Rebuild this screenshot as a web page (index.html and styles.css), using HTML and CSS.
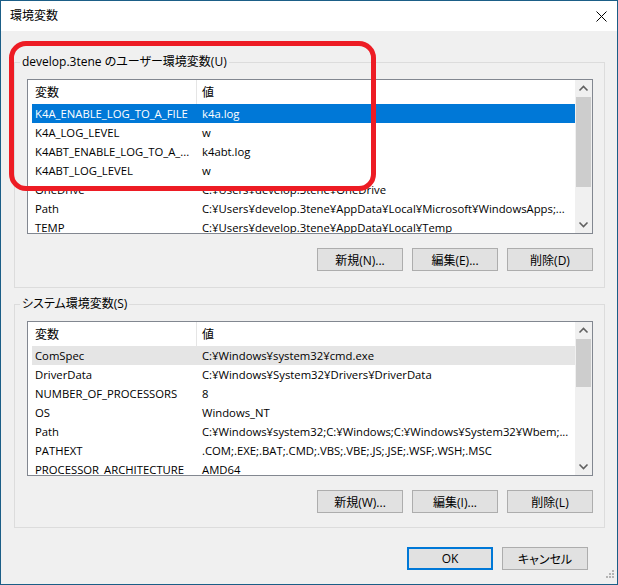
FILE: index.html
```html
<!DOCTYPE html>
<html lang="ja">
<head>
  <meta charset="UTF-8" />
  <title>環境変数</title>
  <link rel="stylesheet" href="styles.css">
</head>
<body>
  <div class="window">
    <div class="titlebar">
      <span class="title">環境変数</span>
      <svg class="close" width="11" height="11" viewBox="0 0 11 11"><path d="M0.5 0.5 L10.5 10.5 M10.5 0.5 L0.5 10.5" stroke="#000" stroke-width="1" fill="none"/></svg>
    </div>

    <div class="content">
      <fieldset class="group">
        <legend>develop.3tene のユーザー環境変数(U)</legend>
        <div class="list">
          <div class="list-main">
            <div class="list-head"><div class="cell name">変数</div><div class="cell value">値</div></div>
            <div class="row selected"><div class="cell name">K4A_ENABLE_LOG_TO_A_FILE</div><div class="cell value">k4a.log</div></div>
            <div class="row"><div class="cell name">K4A_LOG_LEVEL</div><div class="cell value">w</div></div>
            <div class="row"><div class="cell name">K4ABT_ENABLE_LOG_TO_A_...</div><div class="cell value">k4abt.log</div></div>
            <div class="row"><div class="cell name">K4ABT_LOG_LEVEL</div><div class="cell value">w</div></div>
            <div class="row"><div class="cell name">OneDrive</div><div class="cell value">C:¥Users¥develop.3tene¥OneDrive</div></div>
            <div class="row"><div class="cell name">Path</div><div class="cell value">C:¥Users¥develop.3tene¥AppData¥Local¥Microsoft¥WindowsApps;...</div></div>
            <div class="row"><div class="cell name">TEMP</div><div class="cell value">C:¥Users¥develop.3tene¥AppData¥Local¥Temp</div></div>
          </div>
          <div class="scrollbar">
            <svg class="arrow" width="17" height="17" viewBox="0 0 17 17"><path d="M4.5 10.5 L8.5 6.5 L12.5 10.5" stroke="#606060" stroke-width="1.6" fill="none"/></svg>
            <div class="track"><div class="thumb" style="height: 90px"></div></div>
            <svg class="arrow" width="17" height="17" viewBox="0 0 17 17"><path d="M4.5 6.5 L8.5 10.5 L12.5 6.5" stroke="#606060" stroke-width="1.6" fill="none"/></svg>
          </div>
        </div>
        <div class="buttons">
          <button class="btn">新規(N)...</button>
          <button class="btn">編集(E)...</button>
          <button class="btn">削除(D)</button>
        </div>
      </fieldset>

      <fieldset class="group system">
        <legend>システム環境変数(S)</legend>
        <div class="list">
          <div class="list-main">
            <div class="list-head"><div class="cell name">変数</div><div class="cell value">値</div></div>
            <div class="row hover"><div class="cell name">ComSpec</div><div class="cell value">C:¥Windows¥system32¥cmd.exe</div></div>
            <div class="row"><div class="cell name">DriverData</div><div class="cell value">C:¥Windows¥System32¥Drivers¥DriverData</div></div>
            <div class="row"><div class="cell name">NUMBER_OF_PROCESSORS</div><div class="cell value">8</div></div>
            <div class="row"><div class="cell name">OS</div><div class="cell value">Windows_NT</div></div>
            <div class="row"><div class="cell name">Path</div><div class="cell value">C:¥Windows¥system32;C:¥Windows;C:¥Windows¥System32¥Wbem;...</div></div>
            <div class="row"><div class="cell name">PATHEXT</div><div class="cell value">.COM;.EXE;.BAT;.CMD;.VBS;.VBE;.JS;.JSE;.WSF;.WSH;.MSC</div></div>
            <div class="row"><div class="cell name">PROCESSOR_ARCHITECTURE</div><div class="cell value">AMD64</div></div>
          </div>
          <div class="scrollbar">
            <svg class="arrow" width="17" height="17" viewBox="0 0 17 17"><path d="M4.5 10.5 L8.5 6.5 L12.5 10.5" stroke="#606060" stroke-width="1.6" fill="none"/></svg>
            <div class="track"><div class="thumb" style="height: 48px"></div></div>
            <svg class="arrow" width="17" height="17" viewBox="0 0 17 17"><path d="M4.5 6.5 L8.5 10.5 L12.5 6.5" stroke="#606060" stroke-width="1.6" fill="none"/></svg>
          </div>
        </div>
        <div class="buttons">
          <button class="btn">新規(W)...</button>
          <button class="btn">編集(I)...</button>
          <button class="btn">削除(L)</button>
        </div>
      </fieldset>

      <div class="dialog-buttons">
        <button class="btn default">OK</button>
        <button class="btn">キャンセル</button>
      </div>
    </div>

    <svg class="grip" width="12" height="12" viewBox="0 0 12 12">
      <rect x="9" y="0" width="2" height="2" fill="#b4b4b4"/>
      <rect x="6" y="3" width="2" height="2" fill="#b4b4b4"/>
      <rect x="9" y="3" width="2" height="2" fill="#b4b4b4"/>
      <rect x="3" y="6" width="2" height="2" fill="#b4b4b4"/>
      <rect x="6" y="6" width="2" height="2" fill="#b4b4b4"/>
      <rect x="9" y="6" width="2" height="2" fill="#b4b4b4"/>
    </svg>

    <div class="highlight"></div>
  </div>
</body>
</html>
```

FILE: styles.css
```css
* {
  box-sizing: border-box;
}
body {
  margin: 0;
  font-family: "Open Sans", "Noto Sans CJK JP", sans-serif;
  font-feature-settings: "palt";
  font-size: 12px;
  color: #000;
}
.window {
  position: relative;
  width: 618px;
  height: 585px;
  border: 1px solid #1b5e87;
  background: #f0f0f0;
}
.titlebar {
  height: 30px;
  background: #fff;
  display: flex;
  align-items: center;
  justify-content: space-between;
  padding: 0 10px 0 9px;
}
.title {
  font-size: 12px;
  line-height: 16px;
}
.close {
  display: block;
}
.content {
  padding: 0 12px 0 13px;
}
.group {
  margin: 23px 0 0;
  padding: 9px 11px 16px 12px;
  border: 1px solid #dcdcdc;
  min-inline-size: 0;
}
.group.system {
  margin-top: 8px;
  padding-bottom: 14px;
}
.group legend {
  margin-left: -7px;
  padding: 0 2px;
  line-height: 16px;
  height: 16px;
}
.list {
  display: flex;
  height: 155px;
  border: 1px solid #828790;
  background: #fff;
  overflow: hidden;
  font-size: 11.3px;
}
.list-main {
  flex: 1;
  padding-left: 4px;
  overflow: hidden;
}
.list-head {
  display: flex;
  height: 24px;
  align-items: center;
  font-size: 12px;
}
.list-head .value {
  align-self: stretch;
  display: flex;
  align-items: center;
  border-left: 1px solid #e5e5e5;
}
.row {
  display: flex;
  height: 19px;
  align-items: center;
  white-space: nowrap;
}
.row .value {
  border-left: 1px solid transparent;
}
.row.selected {
  background: #0078d7;
  color: #fff;
}
.row.hover {
  background: #e5e5e5;
}
.cell.name {
  width: 164px;
  flex: none;
  padding-left: 3px;
  overflow: hidden;
}
.cell.value {
  padding-left: 5px;
  flex: 1;
  overflow: hidden;
}
.scrollbar {
  width: 17px;
  flex: none;
  display: flex;
  flex-direction: column;
  background: #f0f0f0;
}
.arrow {
  display: block;
  flex: none;
}
.track {
  flex: 1;
}
.thumb {
  margin: 0 1px;
  background: #cdcdcd;
}
.buttons {
  display: flex;
  justify-content: flex-end;
  gap: 9px;
  margin-top: 14px;
}
.btn {
  width: 86px;
  height: 23px;
  padding: 0;
  border: 1px solid #adadad;
  background: #e1e1e1;
  font-family: "Open Sans", "Noto Sans CJK JP", sans-serif;
  font-feature-settings: "palt";
  font-size: 12px;
  color: #000;
}
.btn.default {
  border: 2px solid #0078d7;
}
.dialog-buttons {
  display: flex;
  justify-content: flex-end;
  gap: 9px;
  margin: 19px 17px 0 0;
}
.grip {
  position: absolute;
  right: 2px;
  bottom: 2px;
}
.highlight {
  position: absolute;
  left: 8px;
  top: 40px;
  width: 367px;
  height: 150px;
  border: 5px solid #ed1c24;
  border-radius: 17px;
}
```
